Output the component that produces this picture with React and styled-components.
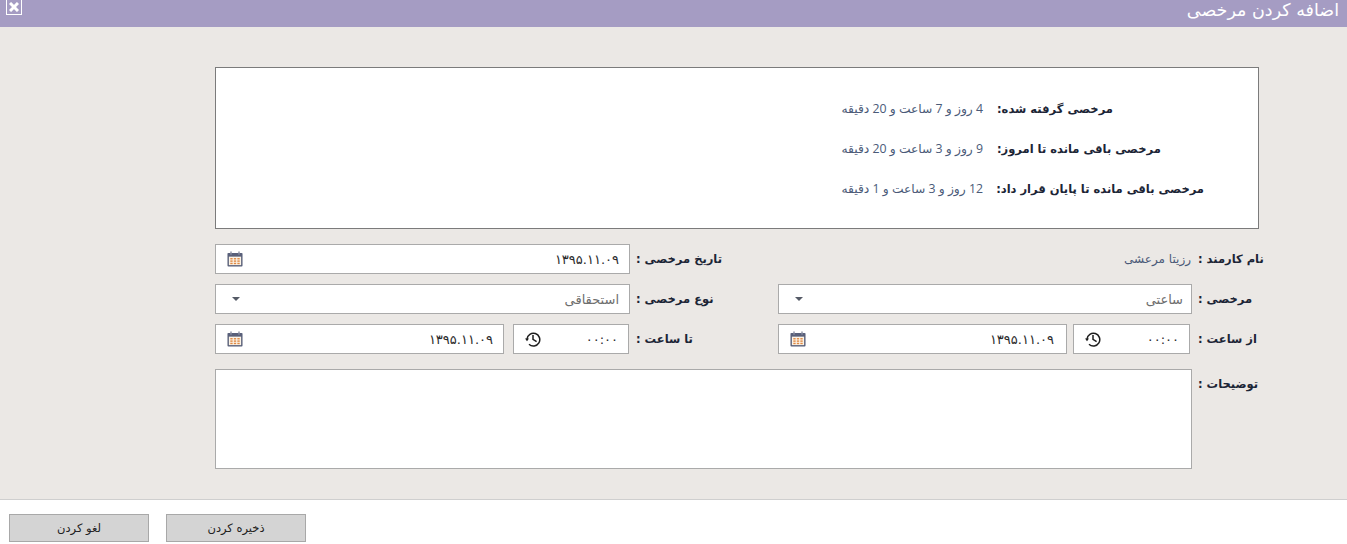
import React from 'react';
import styled, { createGlobalStyle } from 'styled-components';

const GlobalStyle = createGlobalStyle`
  html, body {
    margin: 0;
    padding: 0;
    background: #ffffff;
  }
  body {
    font-family: "DejaVu Sans", "Noto Sans", sans-serif;
    direction: rtl;
  }
`;

const CalendarIcon = () => (
  <svg width="16" height="16" viewBox="0 0 17 17">
    <rect x="0.5" y="2" width="16" height="14.5" rx="1" fill="#59607a" />
    <rect x="2" y="6" width="13" height="9" fill="#fbf3e6" />
    <rect x="3.5" y="0.5" width="1.5" height="3.5" fill="#8a8fa3" />
    <rect x="12" y="0.5" width="1.5" height="3.5" fill="#8a8fa3" />
    <g fill="#e08a45">
      <rect x="3.5" y="7.5" width="2.5" height="1.5" />
      <rect x="7.25" y="7.5" width="2.5" height="1.5" />
      <rect x="11" y="7.5" width="2.5" height="1.5" />
      <rect x="3.5" y="10" width="2.5" height="1.5" />
      <rect x="7.25" y="10" width="2.5" height="1.5" />
      <rect x="11" y="10" width="2.5" height="1.5" />
      <rect x="3.5" y="12.5" width="2.5" height="1.5" />
      <rect x="7.25" y="12.5" width="2.5" height="1.5" />
      <rect x="11" y="12.5" width="2.5" height="1.5" />
    </g>
  </svg>
);

const ClockIcon = () => (
  <svg width="16" height="15" viewBox="0 0 16 15" fill="none" stroke="#1f1f1f" strokeWidth="1.5">
    <path d="M2 7A6.4 6.4 0 1 1 4 12.3" />
    <path d="M0 6.4h4L2 9.2z" fill="#1f1f1f" stroke="none" />
    <path d="M8 3v4.4l3.6 2.2" />
  </svg>
);

const CloseIcon = () => (
  <svg width="10" height="10" viewBox="0 0 10 10" fill="none" stroke="#ffffff" strokeWidth="3">
    <path d="M1 1l8 8M9 1l-8 8" />
  </svg>
);

const Page = styled.div`
  display: flex;
  flex-direction: column;
  height: 544px;
  overflow: hidden;
`;

const TitleBar = styled.header`
  flex: 0 0 27px;
  display: flex;
  justify-content: space-between;
  align-items: flex-start;
  padding: 0 8px 0 6px;
  background: #a59cc3;
`;

const Title = styled.h1`
  margin: 0;
  font-size: 17.5px;
  font-weight: 400;
  line-height: 20px;
  color: #ffffff;
`;

const CloseButton = styled.button`
  display: flex;
  align-items: center;
  justify-content: center;
  width: 16px;
  height: 15px;
  padding: 0;
  border: 1px solid #ffffff;
  border-top: 0;
  background: transparent;
`;

const Main = styled.main`
  flex: 1;
  display: flex;
  flex-direction: column;
  padding: 40px 82px 0 215px;
  background: #ebe8e5;
  color: #1f2a3d;
`;

const Summary = styled.section`
  display: flex;
  flex-direction: column;
  justify-content: center;
  gap: 22px;
  box-sizing: border-box;
  height: 162px;
  margin-right: 6px;
  padding-top: 2px;
  padding-right: 54px;
  border: 1px solid #7b7b7b;
  background: #ffffff;
`;

const SummaryRow = styled.div`
  display: grid;
  grid-template-columns: 207px auto;
  column-gap: 14px;
  justify-content: start;
  height: 18px;
  line-height: 18px;
`;

const SummaryLabel = styled.span`
  font-size: 11.5px;
  font-weight: 700;
  text-align: left;
  white-space: nowrap;
  color: #1c2536;
`;

const SummaryValue = styled.span`
  font-family: "Open Sans", "DejaVu Sans", sans-serif;
  font-size: 12.3px;
  color: #4a5a78;
`;

const Form = styled.div`
  display: grid;
  grid-template-columns: 73px 414px 148px 415px;
  grid-auto-rows: 30px;
  row-gap: 10px;
  margin-top: 15px;
`;

const FieldLabel = styled.label`
  display: flex;
  align-items: ${(p) => (p.$top ? 'flex-start' : 'center')};
  justify-content: flex-end;
  padding-left: 6px;
  padding-top: ${(p) => (p.$top ? '8px' : '0')};
  font-size: 11.5px;
  font-weight: 700;
  white-space: nowrap;
  color: #1c2536;
`;

const StaticValue = styled.div`
  display: flex;
  align-items: center;
  padding-right: 1px;
  font-size: 12px;
  color: #4a5a78;
`;

const Field = styled.div`
  flex: ${(p) => (p.$width ? `0 0 ${p.$width}px` : '1')};
  display: flex;
  align-items: center;
  justify-content: space-between;
  box-sizing: border-box;
  height: 30px;
  padding: 0 ${(p) => p.$end ?? 10}px 0 ${(p) => (p.$select ? 16 : 11)}px;
  border: 1px solid #aaaaaa;
  background: #ffffff;
  font-size: 13px;
  color: ${(p) => (p.$select ? '#6e6e6e' : '#2b2b2b')};
`;

const Caret = styled.span`
  width: 0;
  height: 0;
  border-left: 4px solid transparent;
  border-right: 4px solid transparent;
  border-top: 4px solid #555a66;
`;

const FieldPair = styled.div`
  display: flex;
  gap: ${(p) => p.$gap}px;
  margin-right: ${(p) => p.$inset}px;
`;

const Notes = styled.textarea`
  grid-column: 2 / 5;
  box-sizing: border-box;
  height: 100px;
  border: 1px solid #aaaaaa;
  background: #ffffff;
  resize: none;
`;

const NotesRow = styled(Form)`
  grid-auto-rows: 100px;
`;

const Footer = styled.footer`
  flex: 0 0 45px;
  box-sizing: border-box;
  display: flex;
  justify-content: flex-end;
  gap: 17px;
  padding: 14px 9px 0;
  border-top: 1px solid #cfcfcf;
  background: #ffffff;
`;

const Button = styled.button`
  width: 140px;
  height: 28px;
  padding: 0;
  border: 1px solid #a8a8a8;
  background: #d4d4d4;
  font-family: inherit;
  font-size: 11.5px;
  color: #222222;
`;

const summaryRows = [
  ['مرخصی گرفته شده:', '4 روز و 7 ساعت و 20 دقیقه'],
  ['مرخصی باقی مانده تا امروز:', '9 روز و 3 ساعت و 20 دقیقه'],
  ['مرخصی باقی مانده تا پایان قرار داد:', '12 روز و 3 ساعت و 1 دقیقه'],
];

const DateField = ({ value, end }) => (
  <Field $end={end}>
    <span>{value}</span>
    <CalendarIcon />
  </Field>
);

const TimeField = ({ width }) => (
  <Field $width={width}>
    <span>۰۰:۰۰</span>
    <ClockIcon />
  </Field>
);

const SelectField = ({ value, end }) => (
  <Field $select $end={end}>
    <span>{value}</span>
    <Caret />
  </Field>
);

const App = () => (
  <Page>
    <GlobalStyle />
    <TitleBar>
      <Title>اضافه کردن مرخصی</Title>
      <CloseButton aria-label="بستن">
        <CloseIcon />
      </CloseButton>
    </TitleBar>
    <Main>
      <Summary>
        {summaryRows.map(([label, value]) => (
          <SummaryRow key={label}>
            <SummaryLabel>{label}</SummaryLabel>
            <SummaryValue>{value}</SummaryValue>
          </SummaryRow>
        ))}
      </Summary>
      <Form>
        <FieldLabel>نام کارمند :</FieldLabel>
        <StaticValue>رزیتا مرعشی</StaticValue>
        <FieldLabel>تاریخ مرخصی :</FieldLabel>
        <DateField value="۱۳۹۵.۱۱.۰۹" />

        <FieldLabel>مرخصی :</FieldLabel>
        <SelectField value="ساعتی" end={8} />
        <FieldLabel>نوع مرخصی :</FieldLabel>
        <SelectField value="استحقاقی" />

        <FieldLabel>از ساعت :</FieldLabel>
        <FieldPair $gap={6} $inset={2}>
          <TimeField width={117} />
          <DateField value="۱۳۹۵.۱۱.۰۹" end={12} />
        </FieldPair>
        <FieldLabel>تا ساعت :</FieldLabel>
        <FieldPair $gap={9} $inset={1}>
          <TimeField width={116} />
          <DateField value="۱۳۹۵.۱۱.۰۹" />
        </FieldPair>
      </Form>
      <NotesRow>
        <FieldLabel $top>توضیحات :</FieldLabel>
        <Notes />
      </NotesRow>
    </Main>
    <Footer>
      <Button>ذخیره کردن</Button>
      <Button>لغو کردن</Button>
    </Footer>
  </Page>
);

export default App;
